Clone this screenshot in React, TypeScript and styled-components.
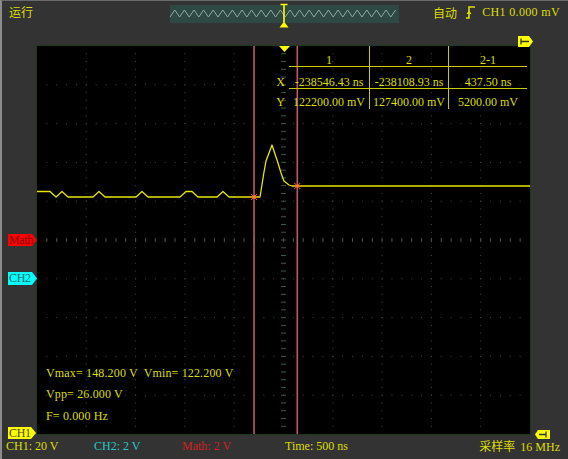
import styled, { createGlobalStyle } from "styled-components";

const YELLOW = "#dede00";
const CJK = `"Noto Sans CJK SC", "Liberation Serif", serif`;

const GlobalStyle = createGlobalStyle`
  html, body { margin: 0; padding: 0; background: #333333; }
  body { font-family: "Liberation Serif", serif; }
`;

const Frame = styled.div`
  position: relative;
  width: 568px;
  height: 459px;
  box-sizing: border-box;
  background: #333333;
  border-left: 2px solid #8c8c8c;
  border-top: 1px solid #6a6a6a;
  display: flex;
  flex-direction: column;
  overflow: hidden;
  color: ${YELLOW};
  font-size: 12px;
`;

const TopBar = styled.div`
  height: 44px;
  box-sizing: border-box;
  padding-top: 4px;
  display: grid;
  grid-template-columns: 168px 229px 1fr;
  align-items: start;
`;

const Status = styled.div`
  padding-left: 7px;
  font-family: ${CJK};
  font-size: 12px;
  line-height: 13px;
`;

const TimeBar = styled.div`
  position: relative;
  height: 18px;
  background: #2e4843;
`;

const Overlay = styled.svg`
  position: absolute;
  overflow: visible;
`;

const TriggerInfo = styled.div`
  display: flex;
  justify-content: flex-end;
  align-items: center;
  gap: 7px;
  padding-right: 8px;
  height: 14px;
  white-space: nowrap;
  letter-spacing: 0.35px;
`;

const Cjk = styled.span`
  font-family: ${CJK};
  font-size: 12px;
  letter-spacing: 0;
  margin-right: 2px;
`;

const Main = styled.div`
  display: flex;
  height: 390px;
`;

const Gutter = styled.div`
  position: relative;
  z-index: 1;
  width: 34px;
  flex: none;
`;

const Tag = styled.div<{ $bg: string; $fg: string; $top: number; $h: number; $w: number }>`
  position: absolute;
  left: 6px;
  top: ${(p) => p.$top}px;
  width: ${(p) => p.$w}px;
  height: ${(p) => p.$h}px;
  box-sizing: border-box;
  padding-left: 1px;
  color: ${(p) => p.$fg};
  font-size: 12px;
  letter-spacing: -0.3px;
  line-height: ${(p) => p.$h}px;
  white-space: nowrap;
  isolation: isolate;
  &::before {
    content: "";
    position: absolute;
    inset: 0;
    z-index: -1;
    background: ${(p) => p.$bg};
    clip-path: polygon(0 0, calc(100% - 5px) 0, 100% 50%, calc(100% - 5px) 100%, 0 100%);
  }
`;

const Screen = styled.div`
  position: relative;
  width: 495px;
  height: 390px;
  box-sizing: border-box;
  border: 1px solid #1e3a1e;
  background: #000;
  flex: none;
`;

const Plot = styled.svg`
  position: absolute;
  inset: 0;
  display: block;
`;

const CursorTable = styled.div`
  position: absolute;
  left: 234px;
  top: 0;
  display: grid;
  grid-template-columns: 18px 80px 79px 79px;
  grid-template-rows: 21px 22px 20px;
`;

const Cell = styled.div<{ $col: number; $row: number }>`
  box-sizing: border-box;
  text-align: ${(p) => (p.$col === 0 ? "right" : "center")};
  padding-right: ${(p) => (p.$col === 0 ? "4px" : "0")};
  padding-top: ${(p) => [7, 8, 6][p.$row]}px;
  line-height: 14px;
  white-space: nowrap;
  border-bottom: ${(p) => (p.$row < 2 && p.$col > 0 ? "1px solid #caca00" : "none")};
  border-left: ${(p) => (p.$col >= 2 ? "1px solid #caca00" : "none")};
`;

const Measures = styled.div`
  position: absolute;
  left: 9px;
  bottom: 7px;
  line-height: 21.5px;
  white-space: pre;
  letter-spacing: 0.15px;
`;

const BottomBar = styled.div`
  height: 24px;
  box-sizing: border-box;
  padding: 0 8px 2px 4px;
  display: grid;
  grid-template-columns: 88px 88px 103px 1fr auto;
  align-items: center;
  line-height: 12px;
  white-space: nowrap;
`;

const Scale = styled.span<{ $color: string }>`
  color: ${(p) => p.$color};
`;

const CornerMarker = styled.svg<{ $left: number; $top: number }>`
  position: absolute;
  left: ${(p) => p.$left}px;
  top: ${(p) => p.$top}px;
`;

const X0 = 37;
const Y0 = 46;
const W = 493;
const H = 388;
const DX = W / 10;
const DY = H / 10;

function Grid() {
  const dots: JSX.Element[] = [];
  for (let k = 1; k < 10; k++) {
    if (k === 5) continue;
    const gx = X0 + DX * k;
    const gy = Y0 + DY * k;
    for (let j = 1; j < 50; j++) {
      dots.push(<rect key={`v${k}-${j}`} x={gx - 0.5} y={Y0 + (DY / 5) * j - 0.5} width={1} height={1} fill="#474747" />);
      dots.push(<rect key={`h${k}-${j}`} x={X0 + (DX / 5) * j - 0.5} y={gy - 0.5} width={1} height={1} fill="#474747" />);
    }
  }
  const cx = X0 + DX * 5;
  const cy = Y0 + DY * 5;
  for (let j = 1; j < 50; j++) {
    dots.push(<rect key={`cv${j}`} x={cx - 2.5} y={Y0 + (DY / 5) * j - 0.5} width={5} height={1} fill="#3d5a4b" />);
    dots.push(<rect key={`ch${j}`} x={X0 + (DX / 5) * j - 0.5} y={cy - 2} width={1} height={4} fill="#3d5a4b" />);
  }
  return <g>{dots}</g>;
}

const trace = [
  [37, 191.5], [50, 191.5], [56, 197], [62, 191.5], [68, 197], [93, 197], [99, 191.5], [105, 197],
  [136, 197], [142, 191.5], [148, 197], [180, 197], [186, 191.5], [192, 191.5], [198, 197],
  [217, 197], [223, 191.5], [229, 197], [260, 197], [264, 172], [266, 161], [272, 145],
  [278, 163], [281, 173], [284, 181], [289, 185], [292, 186], [530, 186],
];

function Star({ x, y }: { x: number; y: number }) {
  return (
    <g stroke="#ff5a3c" strokeWidth={1}>
      <line x1={x - 3} y1={y - 3} x2={x + 3} y2={y + 3} />
      <line x1={x - 3} y1={y + 3} x2={x + 3} y2={y - 3} />
      <line x1={x - 3.5} y1={y} x2={x + 3.5} y2={y} />
      <circle cx={x} cy={y} r={1.4} fill="#ff8040" stroke="none" />
    </g>
  );
}

const tableRows = [
  ["", "1", "2", "2-1"],
  ["X", "-238546.43 ns", "-238108.93 ns", "437.50 ns"],
  ["Y", "122200.00 mV", "127400.00 mV", "5200.00 mV"],
];

function wavePoints() {
  const pts: string[] = [];
  let up = false;
  for (let x = 0; x <= 229; x += 4.8) {
    pts.push(`${x.toFixed(1)},${up ? 5 : 12}`);
    up = !up;
  }
  return pts.join(" ");
}

export default function App() {
  return (
    <>
      <GlobalStyle />
      <Frame>
        <TopBar>
          <Status>运行</Status>
          <TimeBar>
            <Overlay width={229} height={18} style={{ left: 0, top: 0 }}>
              <polyline points={wavePoints()} fill="none" stroke="#93a89f" strokeWidth={1} />
            </Overlay>
            <Overlay width={12} height={24} viewBox="108 -2 12 24" style={{ left: 108, top: -2 }}>
              <path d="M110.5 -0.5 H117.5 M114 -0.5 V17" stroke="#ffff00" strokeWidth={1.6} fill="none" />
              <polygon points="109.5,22.5 118.5,22.5 114,16.5" fill="#ffff00" />
            </Overlay>
          </TimeBar>
          <TriggerInfo>
            <Cjk>自动</Cjk>
            <svg width={9} height={13} viewBox="0 0 9 13">
              <path d="M0 12 H3 V1 H9" stroke={YELLOW} strokeWidth={1.6} fill="none" />
              <polygon points="0.5,8 5.5,8 3,4.5" fill={YELLOW} />
            </svg>
            <span>CH1 0.000 mV</span>
          </TriggerInfo>
        </TopBar>

        <Main>
          <Gutter>
            <Tag $bg="#ff0000" $fg="#7a0000" $top={189} $h={12} $w={29}>Math</Tag>
            <Tag $bg="#00ffff" $fg="#006464" $top={227} $h={13} $w={29}>CH2</Tag>
            <Tag $bg="#ffff00" $fg="#4a4a00" $top={382} $h={12} $w={28}>CH1</Tag>
          </Gutter>
          <Screen>
            <Plot width={W} height={H} viewBox={`${X0} ${Y0} ${W} ${H}`}>
              <Grid />
              <line x1={254} y1={Y0} x2={254} y2={Y0 + H} stroke="#c05868" strokeWidth={1.6} />
              <line x1={297.3} y1={Y0} x2={297.3} y2={Y0 + H} stroke="#c05868" strokeWidth={1.6} />
              <polyline
                points={trace.map((p) => p.join(",")).join(" ")}
                fill="none"
                stroke="#e6e600"
                strokeWidth={1.3}
                strokeLinejoin="round"
              />
              <Star x={254} y={197} />
              <Star x={297.3} y={186} />
              <polygon points="279,46 290,46 284.5,52" fill="#ffff00" />
            </Plot>
            <CursorTable>
              {tableRows.map((row, r) =>
                row.map((text, c) => (
                  <Cell key={`${r}-${c}`} $row={r} $col={c}>
                    {text}
                  </Cell>
                ))
              )}
            </CursorTable>
            <Measures>
              {"Vmax= 148.200 V  Vmin= 122.200 V\nVpp= 26.000 V\nF= 0.000 Hz"}
            </Measures>
          </Screen>
        </Main>

        <BottomBar>
          <Scale $color={YELLOW}>CH1: 20 V</Scale>
          <Scale $color="#22c8c8">CH2: 2 V</Scale>
          <Scale $color="#d42020">Math: 2 V</Scale>
          <Scale $color={YELLOW}>Time: 500 ns</Scale>
          <Scale $color={YELLOW}>
            <Cjk>采样率</Cjk> 16 MHz
          </Scale>
        </BottomBar>

        <CornerMarker $left={516} $top={35} width={16} height={11} viewBox="0 0 16 11">
          <polygon points="0,0 11,0 15,5.5 11,11 0,11" fill="#ffff00" />
          <path d="M3 2.5 V8.5 M3 5.5 H11" stroke="#333" strokeWidth={1.3} />
        </CornerMarker>
        <CornerMarker $left={533} $top={429} width={15} height={9} viewBox="0 0 15 9">
          <polygon points="0,4.5 3,0 15,0 15,9 3,9" fill="#ffff00" />
          <path d="M4 4.5 H11 M11 1.5 V7.5" stroke="#333" strokeWidth={1.3} />
        </CornerMarker>
      </Frame>
    </>
  );
}
